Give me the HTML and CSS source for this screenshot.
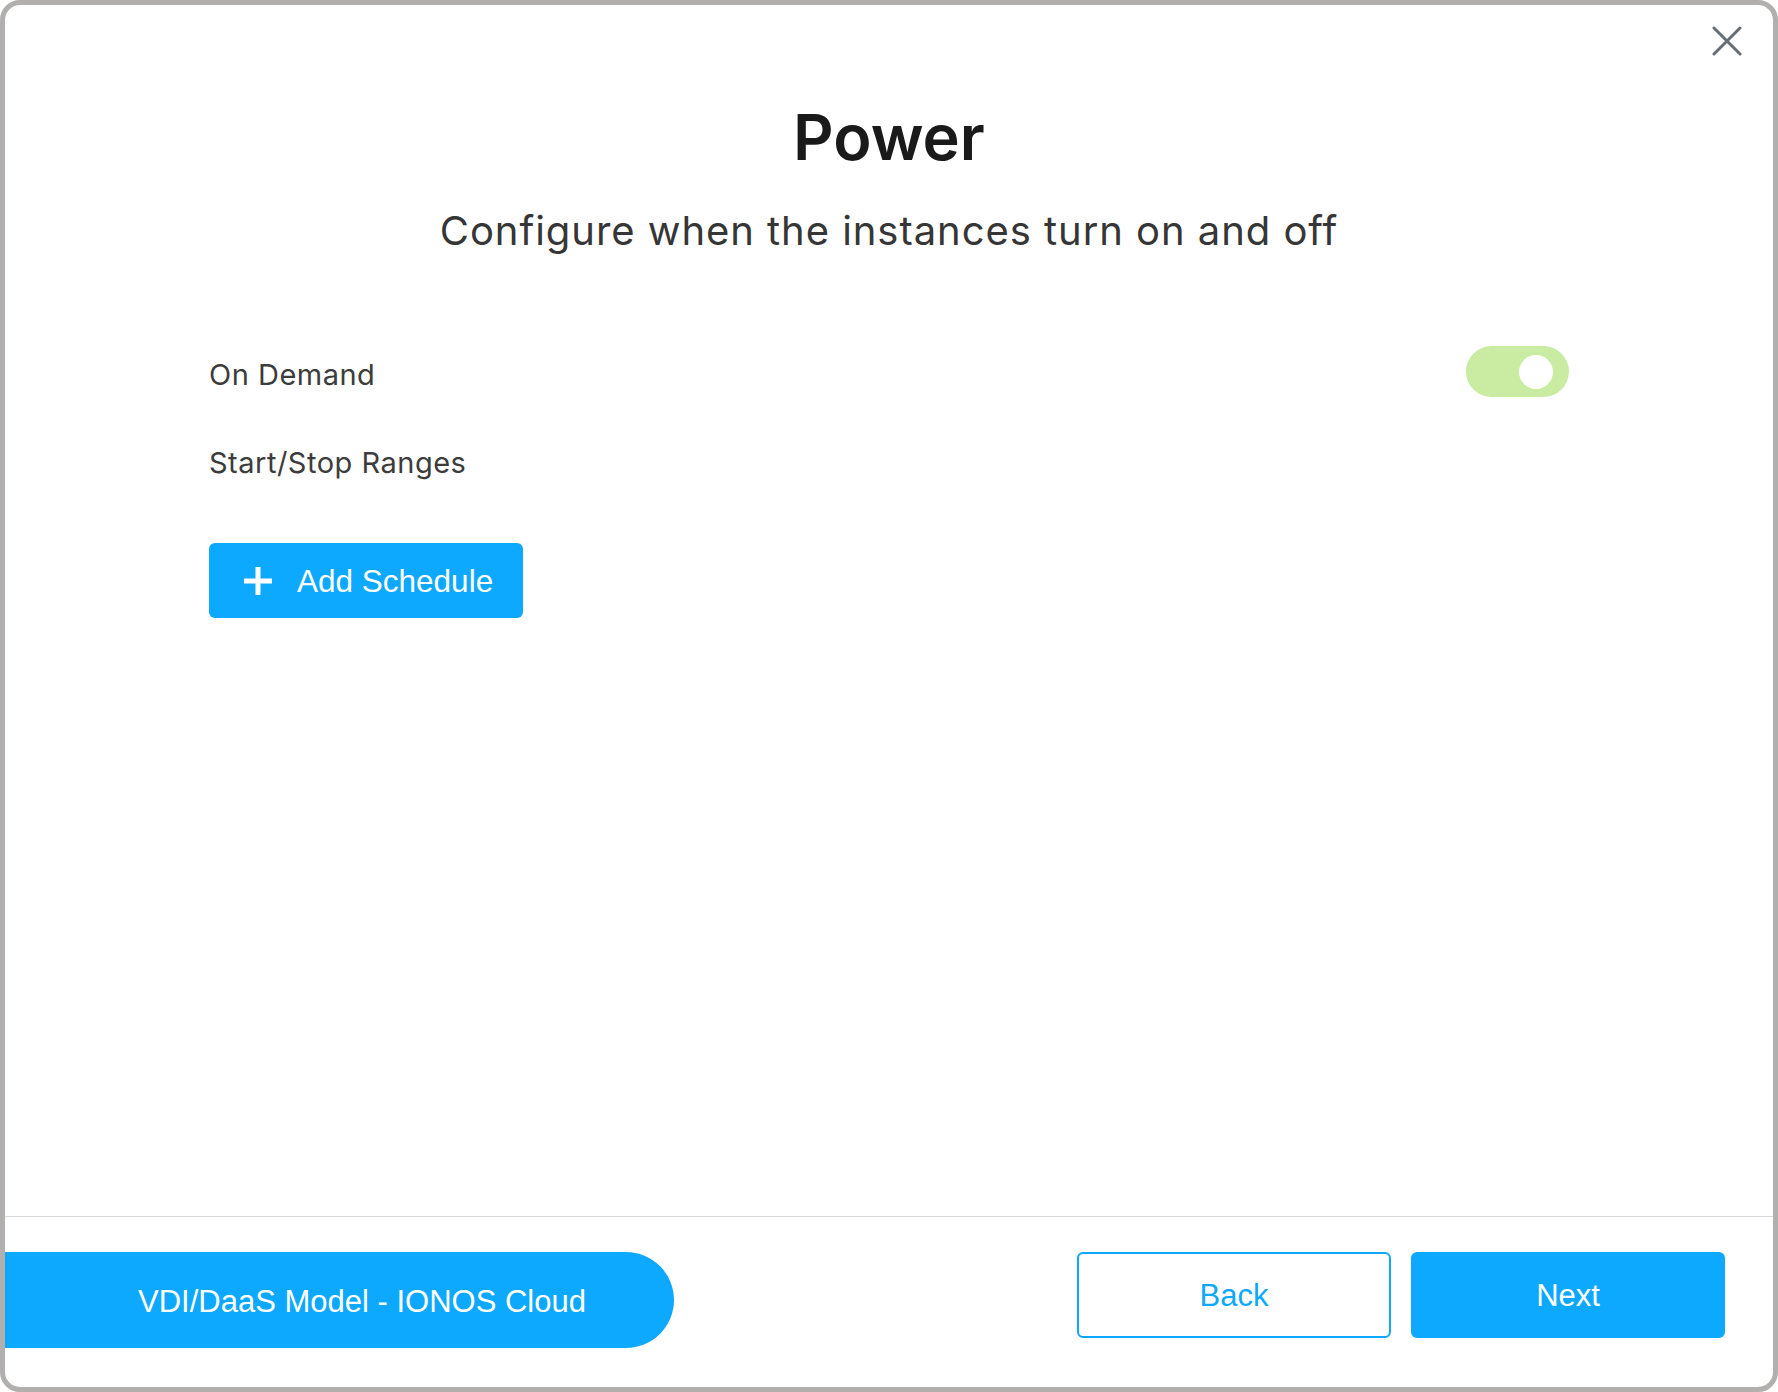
FILE: index.html
```html
<!DOCTYPE html>
<html lang="en">
<head>
<meta charset="utf-8">
<title>Power</title>
<link rel="stylesheet" href="styles.css">
</head>
<body>
<div class="dialog">
  <button class="close" aria-label="Close">
    <svg width="30" height="30" viewBox="0 0 30 30"><path d="M2 2 L28 28 M28 2 L2 28" stroke="#676d75" stroke-width="3" fill="none" stroke-linecap="round"/></svg>
  </button>
  <div class="main">
    <h1 class="title">Power</h1>
    <p class="subtitle">Configure when the instances turn on and off</p>
    <div class="content">
      <div class="row">
        <span class="label">On Demand</span>
        <span class="toggle"><span class="knob"></span></span>
      </div>
      <div class="row ranges">
        <span class="label">Start/Stop Ranges</span>
      </div>
      <button class="add-btn">
        <svg width="30" height="30" viewBox="0 0 30 30"><path d="M15 1 V29 M1 15 H29" stroke="#fff" stroke-width="5" fill="none"/></svg>
        <span>Add Schedule</span>
      </button>
    </div>
  </div>
  <div class="footer">
    <div class="model-pill">VDI/DaaS Model - IONOS Cloud</div>
    <div class="nav">
      <button class="btn btn-outline">Back</button>
      <button class="btn btn-fill">Next</button>
    </div>
  </div>
</div>
</body>
</html>
```
FILE: styles.css
```css
* { box-sizing: border-box; }
html, body { margin: 0; padding: 0; background: #fff; }
body { width: 1778px; height: 1392px; }
.dialog {
  position: relative;
  width: 1778px;
  height: 1392px;
  border: 5px solid #b1b0ae;
  border-radius: 20px;
  display: flex;
  flex-direction: column;
  overflow: hidden;
  background: #fff;
}
.close {
  position: absolute;
  top: 21px;
  right: 31px;
  width: 30px;
  height: 30px;
  padding: 0;
  border: 0;
  background: none;
  cursor: pointer;
}
.close svg { display: block; }
.main {
  flex: 1;
  padding-top: 95px;
  display: flex;
  flex-direction: column;
  align-items: center;
}
.title {
  margin: 0;
  font-family: Inter, "Liberation Sans", sans-serif;
  font-weight: 600;
  font-size: 63px;
  line-height: 75px;
  color: #1a1a1a;
}
.subtitle {
  margin: 32px 0 0;
  font-family: Inter, "Liberation Sans", sans-serif;
  font-weight: 400;
  font-size: 40px;
  line-height: 48px;
  letter-spacing: 0.95px;
  color: #363636;
}
.content {
  width: 1360px;
  margin-top: 94px;
  display: flex;
  flex-direction: column;
  align-items: flex-start;
}
.row {
  width: 100%;
  display: flex;
  align-items: center;
  justify-content: space-between;
  min-height: 51px;
}
.row.ranges { margin-top: 45px; min-height: 35px; }
.label {
  font-family: Inter, "Liberation Sans", sans-serif;
  font-size: 29px;
  line-height: 35px;
  letter-spacing: 0.5px;
  color: #3c3c3c;
}
.toggle {
  width: 103px;
  height: 51px;
  margin-top: -6px;
  border-radius: 26px;
  background: #c9eba2;
  display: flex;
  align-items: center;
  justify-content: flex-end;
  padding-right: 16px;
}
.knob {
  width: 34px;
  height: 34px;
  border-radius: 50%;
  background: #fff;
}
.add-btn {
  margin-top: 63px;
  width: 314px;
  height: 75px;
  border: 0;
  border-radius: 6px;
  background: #0da8ff;
  color: #fff;
  display: flex;
  align-items: center;
  padding: 2px 0 0 34px;
  gap: 24px;
  font-family: "Liberation Sans", Arial, sans-serif;
  font-size: 31.5px;
  cursor: pointer;
}
.add-btn svg { display: block; margin-top: -2px; }
.footer {
  border-top: 1px solid #d8d8d8;
  height: 171px;
  padding-top: 35px;
  display: flex;
  align-items: flex-start;
  justify-content: space-between;
  padding-right: 48px;
}
.model-pill {
  width: 669px;
  height: 96px;
  background: #0da8ff;
  border-radius: 0 48px 48px 0;
  color: #fff;
  font-family: "Liberation Sans", Arial, sans-serif;
  font-size: 31px;
  display: flex;
  align-items: center;
  padding-left: 133px;
  padding-top: 4px;
}
.nav { display: flex; gap: 20px; }
.btn {
  width: 314px;
  height: 86px;
  border-radius: 6px;
  font-family: "Liberation Sans", Arial, sans-serif;
  font-size: 31px;
  padding-top: 2px;
  cursor: pointer;
}
.btn-outline {
  background: #fff;
  border: 2px solid #0da8ff;
  color: #0da8ff;
}
.btn-fill {
  background: #0da8ff;
  border: 2px solid #0da8ff;
  color: #fff;
}
```
